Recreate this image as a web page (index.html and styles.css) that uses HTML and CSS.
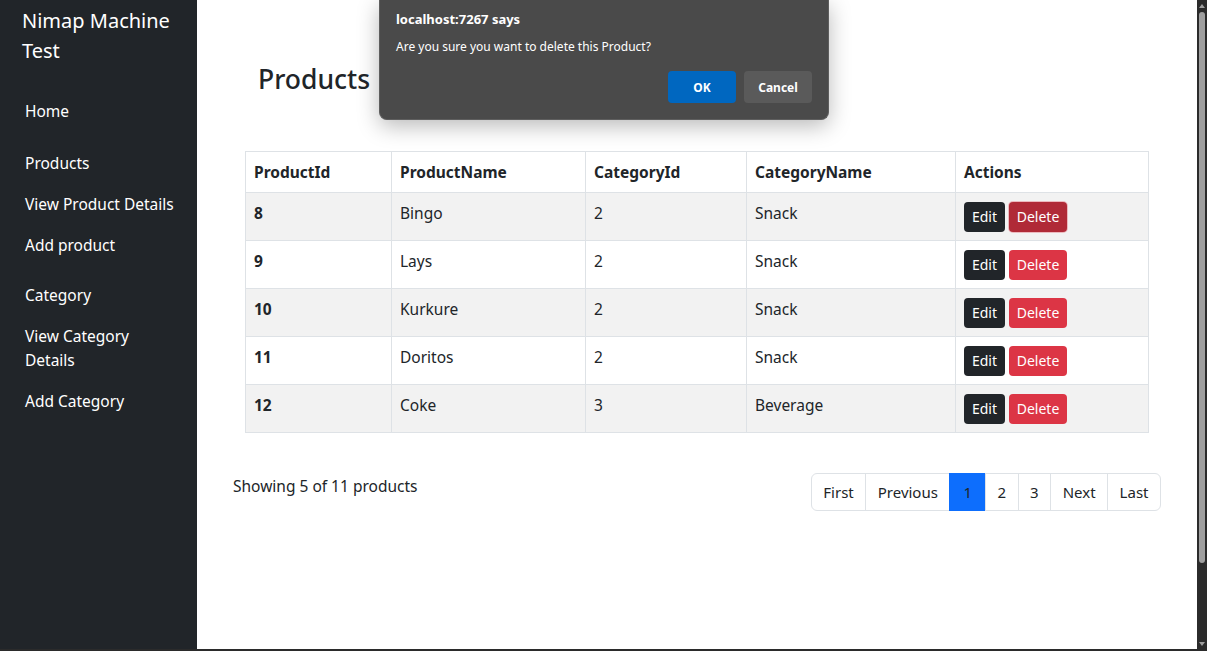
FILE: index.html
```html
<!DOCTYPE html>
<html lang="en">
<head>
<meta charset="utf-8">
<title>Products - Nimap Machine Test</title>
<link rel="stylesheet" href="styles.css">
</head>
<body>
<div class="app">
  <aside class="sidebar">
    <div class="brand">Nimap Machine Test</div>
    <nav class="nav">
      <a class="nav-link gap-after" href="#">Home</a>
      <a class="nav-link" href="#">Products</a>
      <a class="nav-link" href="#">View Product Details</a>
      <a class="nav-link gap-after small-gap" href="#">Add product</a>
      <a class="nav-link" href="#">Category</a>
      <a class="nav-link narrow" href="#">View Category Details</a>
      <a class="nav-link" href="#">Add Category</a>
    </nav>
  </aside>
  <main class="main">
    <h3 class="page-title">Products</h3>
    <table class="table">
      <thead>
        <tr><th class="c1">ProductId</th><th class="c2">ProductName</th><th class="c3">CategoryId</th><th class="c4">CategoryName</th><th class="c5">Actions</th></tr>
      </thead>
      <tbody>
        <tr class="odd"><th>8</th><td>Bingo</td><td>2</td><td>Snack</td><td><button class="btn btn-dark">Edit</button> <button class="btn btn-danger active">Delete</button></td></tr>
        <tr><th>9</th><td>Lays</td><td>2</td><td>Snack</td><td><button class="btn btn-dark">Edit</button> <button class="btn btn-danger">Delete</button></td></tr>
        <tr class="odd"><th>10</th><td>Kurkure</td><td>2</td><td>Snack</td><td><button class="btn btn-dark">Edit</button> <button class="btn btn-danger">Delete</button></td></tr>
        <tr><th>11</th><td>Doritos</td><td>2</td><td>Snack</td><td><button class="btn btn-dark">Edit</button> <button class="btn btn-danger">Delete</button></td></tr>
        <tr class="odd"><th>12</th><td>Coke</td><td>3</td><td>Beverage</td><td><button class="btn btn-dark">Edit</button> <button class="btn btn-danger">Delete</button></td></tr>
      </tbody>
    </table>
    <div class="footer-row">
      <p class="count">Showing 5 of 11 products</p>
      <ul class="pagination">
        <li class="page-item"><a href="#">First</a></li>
        <li class="page-item"><a href="#">Previous</a></li>
        <li class="page-item current"><a href="#">1</a></li>
        <li class="page-item"><a href="#">2</a></li>
        <li class="page-item"><a href="#">3</a></li>
        <li class="page-item"><a href="#">Next</a></li>
        <li class="page-item"><a href="#">Last</a></li>
      </ul>
    </div>
  </main>
  <div class="scrollbar">
    <div class="arrow up"></div>
    <div class="thumb"></div>
    <div class="arrow down"></div>
  </div>
  <div class="dialog">
    <div class="dialog-title">localhost:7267 says</div>
    <div class="dialog-msg">Are you sure you want to delete this Product?</div>
    <div class="dialog-actions">
      <button class="dbtn ok">OK</button>
      <button class="dbtn cancel">Cancel</button>
    </div>
  </div>
</div>
</body>
</html>
```
FILE: styles.css
```css
* { box-sizing: border-box; }
html, body { margin: 0; padding: 0; }
body {
  width: 1207px;
  height: 651px;
  overflow: hidden;
  background: #2b2b2b;
  font-family: "Noto Sans", "Open Sans", sans-serif;
  color: #212529;
}
.app {
  position: relative;
  display: flex;
  height: 649px;
}
.sidebar {
  width: 197px;
  flex: none;
  background: #212529;
  color: #fff;
  padding: 6px 0 0 22px;
}
.brand {
  font-size: 20px;
  line-height: 30px;
  width: 150px;
}
.nav {
  display: flex;
  flex-direction: column;
  margin-top: 25px;
  padding-left: 3px;
}
.nav-link {
  color: #fff;
  text-decoration: none;
  font-size: 15.5px;
  line-height: 24px;
  padding: 8px 0 9px 0;
  width: 170px;
}
.nav-link.narrow { width: 140px; }
.gap-after { margin-bottom: 11px; }
.gap-after.small-gap { margin-bottom: 9px; }
.main {
  flex: 1;
  background: #fff;
  padding: 0 48px;
}
.page-title {
  margin: 60px 0 0 13px;
  font-size: 26.5px;
  font-weight: 500;
  line-height: 38px;
  height: 91px;
}
.table {
  width: 904px;
  border-collapse: collapse;
  font-size: 15.5px;
}
.table th, .table td {
  border: 1px solid #dee2e6;
  padding: 8px 8px;
  text-align: left;
  vertical-align: top;
  line-height: 24px;
}
.table thead tr { height: 41px; }
.table thead th { padding-top: 8px; }
.table tbody tr { height: 48px; }
.table th { font-weight: 700; }
.table td { font-weight: 400; }
.table tr.odd { background: #f2f2f2; }
.c1 { width: 146px; }
.c2 { width: 194px; }
.c3 { width: 161px; }
.c4 { width: 209px; }
.btn {
  font-family: inherit;
  font-size: 14px;
  line-height: 20px;
  height: 30px;
  padding: 4px 6px;
  border: 1px solid transparent;
  border-radius: 4px;
  color: #fff;
  cursor: pointer;
  vertical-align: top;
  margin-top: 1px;
}
.btn-dark { background: #212529; width: 41px; }
.btn-danger { background: #dc3545; width: 58px; }
.btn-danger.active { background: #b02a37; box-shadow: 0 0 0 1px rgba(225, 83, 97, 0.35); }
.footer-row {
  display: flex;
  justify-content: space-between;
  align-items: flex-start;
  margin: 40px -12px 0 -12px;
}
.count {
  margin: 1px 0 0 0;
  font-size: 15.5px;
  line-height: 24px;
}
.pagination {
  display: flex;
  list-style: none;
  margin: 0;
  padding: 0;
}
.page-item a {
  display: block;
  height: 38px;
  padding: 6px 11.5px;
  font-size: 15px;
  line-height: 24px;
  color: #212529;
  text-decoration: none;
  border: 1px solid #dee2e6;
  margin-left: -1px;
}
.page-item.current a { padding: 6px 13px; }
.page-item:first-child a { border-radius: 6px 0 0 6px; margin-left: 0; }
.page-item:last-child a { border-radius: 0 6px 6px 0; }
.page-item.current a { background: #0d6efd; border-color: #0d6efd; }
.scrollbar {
  width: 10px;
  flex: none;
  background: #2b2b2b;
  display: flex;
  flex-direction: column;
  align-items: center;
}
.arrow { width: 0; height: 0; border-left: 3px solid transparent; border-right: 3px solid transparent; }
.arrow.up { border-bottom: 4px solid #9f9f9f; margin-top: 4px; }
.arrow.down { border-top: 4px solid #9f9f9f; margin-top: auto; margin-bottom: 3px; }
.thumb {
  width: 6px;
  height: 551px;
  margin-top: 4px;
  background: #9f9f9f;
  border-radius: 3px;
}
.dialog {
  position: absolute;
  left: 379px;
  top: 0;
  width: 450px;
  height: 120px;
  background: #4a4a4a;
  border: 1px solid #5e5e5e;
  border-top: none;
  border-radius: 0 0 8px 8px;
  box-shadow: 0 6px 22px rgba(0, 0, 0, 0.28);
  color: #fff;
  padding: 10px 16px 0 16px;
  font-family: "Noto Sans", "Open Sans", sans-serif;
}
.dialog-title {
  font-size: 13px;
  font-weight: 700;
  line-height: 18px;
}
.dialog-msg {
  font-size: 12px;
  line-height: 18px;
  margin-top: 10px;
}
.dialog-actions {
  display: flex;
  justify-content: flex-end;
  gap: 8px;
  margin-top: 15px;
}
.dbtn {
  width: 68px;
  height: 32px;
  border: none;
  border-radius: 4px;
  color: #fff;
  font-family: inherit;
  font-size: 12px;
  font-weight: 700;
}
.dbtn.ok { background: #0067c0; }
.dbtn.cancel { background: #5a5a5a; }
```
